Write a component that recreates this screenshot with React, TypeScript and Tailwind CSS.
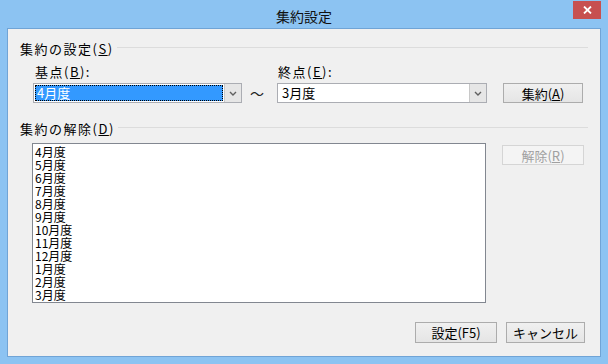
import React from 'react';

const months = ['4月度', '5月度', '6月度', '7月度', '8月度', '9月度', '10月度', '11月度', '12月度', '1月度', '2月度', '3月度'];

function Chevron() {
  return (
    <svg width="8" height="5" viewBox="0 0 8 5" className="block">
      <path d="M1 1 L4 4 L7 1" fill="none" stroke="#606060" strokeWidth="1.4" />
    </svg>
  );
}

function Combo({ value, selected }: { value: string; selected?: boolean }) {
  return (
    <div className="h-[20px] border border-[#abadb3] bg-white flex">
      <div className="flex-1 p-[1px] flex">
        <div
          className={
            selected
              ? 'flex-1 bg-[#3399ff] text-white outline-1 outline-dotted outline-black -outline-offset-1 pl-[2px] text-[13px] leading-[16px]'
              : 'flex-1 text-black pl-[3px] text-[13px] leading-[16px]'
          }
        >
          {value}
        </div>
      </div>
      <div className="w-[17px] border-l border-[#c8c8c8] bg-[#e6e6e6] flex items-center justify-center">
        <Chevron />
      </div>
    </div>
  );
}

function Button({ children, disabled, className = '' }: { children: React.ReactNode; disabled?: boolean; className?: string }) {
  return (
    <button
      className={
        (disabled
          ? 'border-[#d5d5d5] bg-[#f4f4f4] text-[#a0a0a0] '
          : 'border-[#acacac] bg-gradient-to-b from-[#f0f0f0] to-[#e5e5e5] text-black ') +
        'border text-[13px] leading-none flex items-center justify-center ' +
        className
      }
    >
      {children}
    </button>
  );
}

function SectionHeader({ label, keyChar }: { label: string; keyChar: string }) {
  return (
    <div className="h-[16px] flex gap-[3px]">
      <span className="text-[13px] leading-[16px] text-black tracking-[1.5px]">
        {label}(<span className="underline">{keyChar}</span>)
      </span>
      <div className="flex-1 h-px bg-[#dcdcdc] mt-[6px]" />
    </div>
  );
}

export default function App() {
  return (
    <div className="w-[608px] h-[364px] bg-[#8cc3f2] flex flex-col font-['Noto_Sans_CJK_JP',sans-serif]">
      {/* Title bar */}
      <div className="h-[28px] grid grid-cols-[1fr_auto_1fr]">
        <div />
        <div className="text-[14px] leading-[14px] pt-[9px] text-[#111]">集約設定</div>
        <div className="flex justify-end pr-[7px] pt-[1px]">
          <div className="w-[28px] h-[18px] bg-[#c75050] flex items-center justify-center">
            <svg width="9" height="8" viewBox="0 0 9 8">
              <path d="M1 0.5 L8 7.5 M8 0.5 L1 7.5" stroke="white" strokeWidth="1.8" />
            </svg>
          </div>
        </div>
      </div>

      {/* Client area */}
      <div className="ml-[7px] w-[594px] h-[329px] border border-[#70a4d6] bg-[#f0f0f0] flex flex-col px-[12px]">
        <div className="mt-[12px]">
          <SectionHeader label="集約の設定" keyChar="S" />
        </div>

        <div className="mt-[6px] ml-[13px] grid grid-cols-[209px_35px_210px_16px_80px] grid-rows-[20px_20px]">
          <div className="pl-[2px] text-[13px] leading-[17px] text-black tracking-[1.5px]">
            基点(<span className="underline">B</span>):
          </div>
          <div />
          <div className="pl-[1px] text-[13px] leading-[17px] text-black tracking-[1.5px]">
            終点(<span className="underline">E</span>):
          </div>
          <div />
          <div />
          <Combo value="4月度" selected />
          <div className="flex items-center justify-center text-[14px] text-[#222] pr-[5px]">～</div>
          <Combo value="3月度" />
          <div />
          <Button className="h-[20px]">
            集約(<span className="underline">A</span>)
          </Button>
        </div>

        <div className="mt-[18px]">
          <SectionHeader label="集約の解除" keyChar="D" />
        </div>

        <div className="mt-[6px] ml-[12px] flex gap-[16px] items-start">
          <div className="w-[454px] h-[160px] border border-[#828790] bg-white pl-[2px] pt-[1px] overflow-hidden">
            {months.map((m) => (
              <div key={m} className="h-[13px] text-[12px] leading-[13px] text-black">
                {m}
              </div>
            ))}
          </div>
          <Button disabled className="w-[82px] h-[20px] mt-[2px]">
            解除(<span className="underline">R</span>)
          </Button>
        </div>

        <div className="mt-[19px] mr-[3px] flex justify-end gap-[9px]">
          <Button className="w-[82px] h-[21px]">設定(F5)</Button>
          <Button className="w-[79px] h-[21px]">キャンセル</Button>
        </div>
      </div>
    </div>
  );
}
